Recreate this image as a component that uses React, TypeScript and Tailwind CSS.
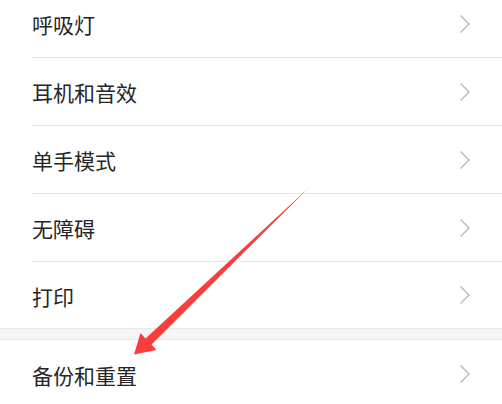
import React from "react";

const rows1 = ["呼吸灯", "耳机和音效", "单手模式", "无障碍"];

function Chevron() {
  return (
    <svg width="12" height="20" viewBox="0 0 12 20" className="shrink-0">
      <path d="M1.5 1.5 L10 10 L1.5 18.5" fill="none" stroke="#b8b8b8" strokeWidth="1.4" />
    </svg>
  );
}

function Row({ label, border = true, h = "h-[68px]" }: { label: string; border?: boolean; h?: string }) {
  return (
    <div className="pl-8">
      <div
        className={`flex items-center justify-between pr-[31px] ${h} ${border ? "border-b border-[#e6e6e6]" : ""}`}
      >
        <span className="text-[21px] leading-none text-[#262626] pt-[2px]">{label}</span>
        <Chevron />
      </div>
    </div>
  );
}

export default function App() {
  return (
    <div
      className="relative w-[502px] h-[404px] overflow-hidden bg-white"
      style={{ fontFamily: '"Noto Sans CJK SC", "Noto Sans", sans-serif' }}
    >
      <div className="mt-[-10px] flex flex-col">
        {rows1.map((r) => (
          <Row key={r} label={r} />
        ))}
        <Row label="打印" border={false} h="h-[66px]" />
        <div className="h-[12px] bg-[#f5f5f5] border-t border-b border-[#e8e8e8]" />
        <Row label="备份和重置" border={false} />
      </div>
      <svg className="absolute inset-0 pointer-events-none" width="502" height="404" viewBox="0 0 502 404">
        <polygon
          points="309,187.5 151.5,344.5 156.5,350 134,354.5 140.5,333 145.5,338.5 308.2,188.3"
          fill="#fd3c3c"
        />
      </svg>
    </div>
  );
}
